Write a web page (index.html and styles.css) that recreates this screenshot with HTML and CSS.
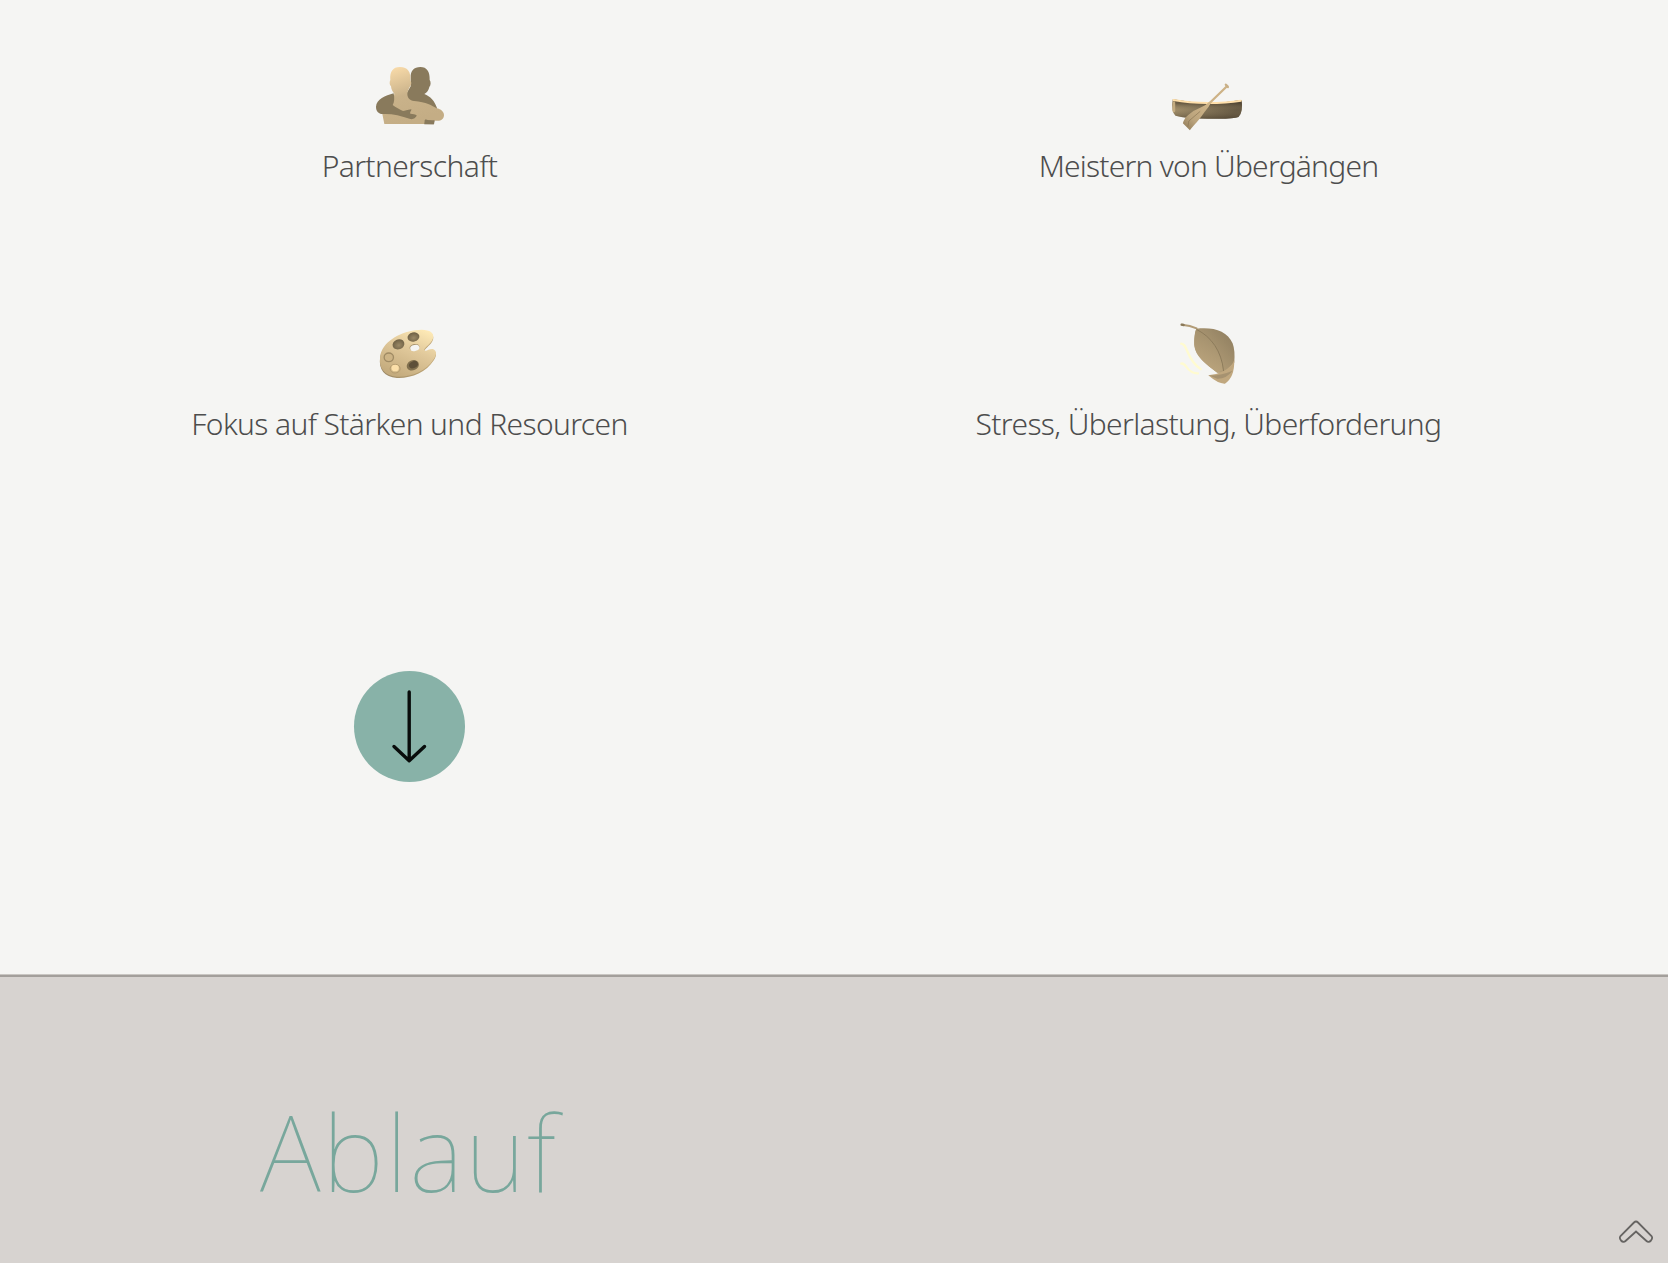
FILE: index.html
```
<!DOCTYPE html>
<html lang="de">
<head>
<meta charset="utf-8">
<title>Ablauf</title>
<link rel="stylesheet" href="styles.css">
</head>
<body>
<section class="topics">
  <div class="grid">
    <div class="topic">
      <svg class="icon" viewBox="0 0 100 90">
        <defs>
          <linearGradient id="skin" x1="0" y1="0" x2=".35" y2="1"><stop offset="0" stop-color="#ffe0ad"/><stop offset=".55" stop-color="#c9b28a"/><stop offset="1" stop-color="#c4ad85"/></linearGradient>
        </defs>
        <g transform="translate(0 5) scale(.33333)">
          <path fill="#897a5c" d="M152 67C151 48 162 36 181 36C201 36 210 50 209 75C213 80 213 91 208 96C206 106 201 112 193 117C211 124 224 138 231 159L222 208H193L150 150L138 118L152 94Z"/>
          <path fill="url(#skin)" d="M73 207L67 177L96 146L103 116C97 110 94 103 93 94C88 89 88 81 91 75C89 50 98 36 120 36C144 36 153 52 151 76C156 83 154 91 149 96C145 104 142 111 142 117C142 128 149 137 162 138C199 141 216 152 230 160C243 162 252 171 252 180C252 192 242 199 228 197L194 195V207Z"/>
          <path fill="#897a5c" d="M101 115C76 122 49 133 48 155C48 171 58 178 72 177C95 176 122 182 151 192C159 194 169 188 170 181C167 177 158 178 151 176C149 169 155 168 154 163C142 164 134 168 129 168C119 163 107 157 98 150C103 142 104 130 101 115Z"/>
          <path fill="#897a5c" d="M193 207L196 193Q209 198 223 196L221 208Z"/>
        </g>
      </svg>
      <p class="label">Partnerschaft</p>
    </div>
    <div class="topic">
      <svg class="icon" viewBox="0 0 100 90">
        <defs>
          <linearGradient id="hull" x1="0" x2="1" y2=".25"><stop offset="0" stop-color="#ad9870"/><stop offset=".45" stop-color="#86775a"/><stop offset="1" stop-color="#5c503c"/></linearGradient>
          <linearGradient id="hullshade" x1="0" y1="0" x2="0" y2="1"><stop offset=".2" stop-color="#4b4030" stop-opacity=".65"/><stop offset=".55" stop-color="#a08d6a" stop-opacity=".15"/><stop offset="1" stop-color="#4c402e" stop-opacity=".55"/></linearGradient>
          <linearGradient id="paddle" x1="1" x2="0" y1="0" y2="1"><stop offset="0" stop-color="#d4b98c"/><stop offset=".65" stop-color="#baa37c"/><stop offset="1" stop-color="#8c7754"/></linearGradient>
        </defs>
        <g transform="translate(1.200 20) scale(.33333)">
          <path fill="url(#hull)" d="M41 88Q143 108 247 90Q253 125 238 141Q224 148 145 146Q78 146 49 137Q35 127 41 88Z"/>
          <path fill="url(#hullshade)" d="M41 88Q143 108 247 90Q253 125 238 141Q224 148 145 146Q78 146 49 137Q35 127 41 88Z"/>
          <path fill="none" stroke="#ffdfaa" stroke-width="6" stroke-linecap="round" d="M43 90Q90 99 145 99Q202 99 245 92"/>
          <path fill="none" stroke="#c3ab80" stroke-width="8" stroke-linecap="round" d="M44 98V123"/>
          <path fill="none" stroke="#cdb286" stroke-width="7" stroke-linecap="round" d="M139 111L204 48"/>
          <path fill="none" stroke="#c9b087" stroke-width="7" stroke-linecap="round" d="M200 44L206 51"/>
          <path fill="url(#paddle)" d="M158 94Q149 112 136 126Q119 151 105 165Q96 175 92 181L71 160Q75 143 88 134Q104 120 123 113Q139 108 153 94Z"/>
          <path fill="none" stroke="#85714f" stroke-opacity=".6" stroke-width="3" d="M123 124L89 153L86 170"/>
        </g>
      </svg>
      <p class="label label-tight">Meistern von Übergängen</p>
    </div>
    <div class="topic">
      <svg class="icon" viewBox="0 0 100 90">
        <defs>
          <linearGradient id="wood" x1=".85" y1="0" x2=".35" y2="1"><stop offset="0" stop-color="#ffebb7"/><stop offset=".45" stop-color="#e1c99b"/><stop offset="1" stop-color="#c4ab7d"/></linearGradient>
          <linearGradient id="wooddark" x1="0" x2="1"><stop offset="0" stop-color="#9a8765"/><stop offset="1" stop-color="#c3a976"/></linearGradient>
          <radialGradient id="paint" cx=".5" cy=".6" r=".6"><stop offset="0" stop-color="#9b8966"/><stop offset="1" stop-color="#6c5e43"/></radialGradient>
        </defs>
        <g transform="translate(4.800 7) scale(.33333)">
          <path fill="url(#wooddark)" transform="translate(0 4)" d="M154 46C190 39 213 51 208 69C203 87 186 92 181 105C187 111 194 101 207 102C220 107 219 119 210 132C187 169 141 187 99 185C62 182 44 159 49 125C55 82 105 53 154 46Z"/>
          <path fill="url(#wood)" d="M154 46C190 39 213 51 208 69C203 87 186 92 181 105C187 111 194 101 207 102C220 107 219 119 210 132C187 169 141 187 99 185C62 182 44 159 49 125C55 82 105 53 154 46Z"/>
          <ellipse cx="152" cy="97" rx="15" ry="10" transform="rotate(-12 152 97)" fill="#a8946e"/>
          <ellipse cx="153" cy="99" rx="14" ry="9" transform="rotate(-12 153 99)" fill="#f5f5f3"/>
          <ellipse cx="149" cy="66" rx="18" ry="14" transform="rotate(-12 149 66)" fill="url(#paint)"/>
          <ellipse cx="104" cy="88" rx="18" ry="15" transform="rotate(-20 104 88)" fill="url(#paint)"/>
          <ellipse cx="75" cy="127" rx="14" ry="13" fill="#cdb486" stroke="#a08b64" stroke-width="4"/>
          <ellipse cx="94" cy="161" rx="15" ry="13" fill="#cfb686" stroke="#b49b6e" stroke-width="3"/>
          <ellipse cx="94" cy="159" rx="11" ry="10" fill="#fbdfa9"/>
          <ellipse cx="147" cy="151" rx="19" ry="15" transform="rotate(-25 147 151)" fill="#82714f"/>
          <ellipse cx="149" cy="149" rx="14" ry="10" transform="rotate(-25 149 149)" fill="#5e5039"/>
        </g>
      </svg>
      <p class="label">Fokus auf Stärken und Resourcen</p>
    </div>
    <div class="topic">
      <svg class="icon" viewBox="0 0 100 90">
        <defs>
          <linearGradient id="leaf" x1="1" y1="0" x2=".2" y2=".8"><stop offset="0" stop-color="#8b7b5d"/><stop offset="1" stop-color="#b8a27b"/></linearGradient>
          <linearGradient id="leafin" x1=".8" y1="0" x2=".4" y2="1"><stop offset="0" stop-color="#9c8a68"/><stop offset="1" stop-color="#bda67e"/></linearGradient>
        </defs>
        <g transform="translate(6.600 2) scale(.33333)">
          <path fill="none" stroke="#b29c77" stroke-width="6" stroke-linecap="round" d="M52 44Q77 46 96 55"/>
          <path fill="none" stroke="#8a7959" stroke-width="7" stroke-linecap="round" d="M51 44L57 45"/>
          <path fill="url(#leaf)" d="M95 56C145 50 188 62 204 100Q212 121 209 158L178 190L158 188C125 163 91 139 89 105Q88 72 95 56Z"/>
          <path fill="url(#leafin)" d="M95 56C92 68 87 88 90 110C97 144 130 166 158 188L176 180C171 132 144 84 95 56Z"/>
          <path fill="none" stroke="#8d7b5b" stroke-width="3" d="M97 59C139 80 171 122 177 184"/>
          <path fill="#c0a77e" d="M209 151Q210 203 181 221Q161 222 131 196Q154 195 177 183Q200 172 209 151Z"/>
          <path fill="#a69270" d="M132 196Q164 199 204 182Q185 207 158 206Z"/>
          <path fill="none" stroke="#fffbd0" stroke-width="7" stroke-linecap="round" d="M50 101C70 101 64 148 108 177M50 161C65 155 65 191 100 190"/>
        </g>
      </svg>
      <p class="label">Stress, Überlastung, Überforderung</p>
    </div>
    <a class="next" href="#ablauf" aria-label="Weiter">
      <svg class="next-icon" viewBox="0 0 111 111"><path d="M55.200 21V89.800M40 75.500L55.200 89.800L70.500 75.500"/></svg>
    </a>
  </div>
</section>
<section class="process" id="ablauf">
  <h2 class="title">Ablauf</h2>
</section>
<a class="to-top" href="#" aria-label="Nach oben">
  <svg class="to-top-icon" viewBox="0 0 36 26"><path d="M18 2.500Q19 2.500 20 3.500L33.500 17Q35 19 33 21.500Q30.500 24 28.500 22L18 12.500L7.500 22Q5.500 24 3 21.500Q1 19 2.500 17L16 3.500Q17 2.500 18 2.500Z"/></svg>
</a>
</body>
</html>
```
FILE: styles.css
```
body {
  margin: 0;
  height: 1263px;
  overflow: hidden;
  background: #f5f5f3;
  font-family: "Noto Sans", sans-serif;
  color: #4d4d4d;
}
.topics {
  box-sizing: border-box;
  height: 975px;
  padding: 50px 60px 0 10px;
  border-bottom: 1px solid #c9c6c2;
}
.grid {
  display: grid;
  grid-template-columns: 799px 799px;
  grid-template-rows: 258px 258px auto;
  justify-items: center;
}
.topic {
  display: flex;
  flex-direction: column;
  align-items: center;
}
.icon {
  width: 100px;
  height: 90px;
}
.label {
  margin: 5px 0 0;
  font-size: 30px;
  font-weight: 275;
  line-height: 42px;
  letter-spacing: -0.62px;
  white-space: nowrap;
}
.label-tight {
  letter-spacing: -0.78px;
}
.next {
  display: flex;
  width: 111px;
  height: 111px;
  margin-top: 105px;
  border-radius: 50%;
  background: #88b2a8;
}
.next-icon {
  width: 111px;
  height: 111px;
  fill: none;
  stroke: #080c0b;
  stroke-width: 3.4;
  stroke-linecap: round;
  stroke-linejoin: round;
}
.process {
  box-sizing: border-box;
  height: 288px;
  padding: 103px 0 0 260px;
  border-top: 2px solid #a39f9b;
  background: #d7d3d0;
}
.title {
  margin: 0;
  font-size: 105px;
  font-weight: 100;
  line-height: 143px;
  letter-spacing: 2px;
  color: #78a79c;
}
.to-top {
  position: fixed;
  right: 14px;
  bottom: 18px;
  display: flex;
}
.to-top-icon {
  width: 36px;
  height: 26px;
  fill: none;
  stroke: #666462;
  stroke-width: 1.8;
}
```
